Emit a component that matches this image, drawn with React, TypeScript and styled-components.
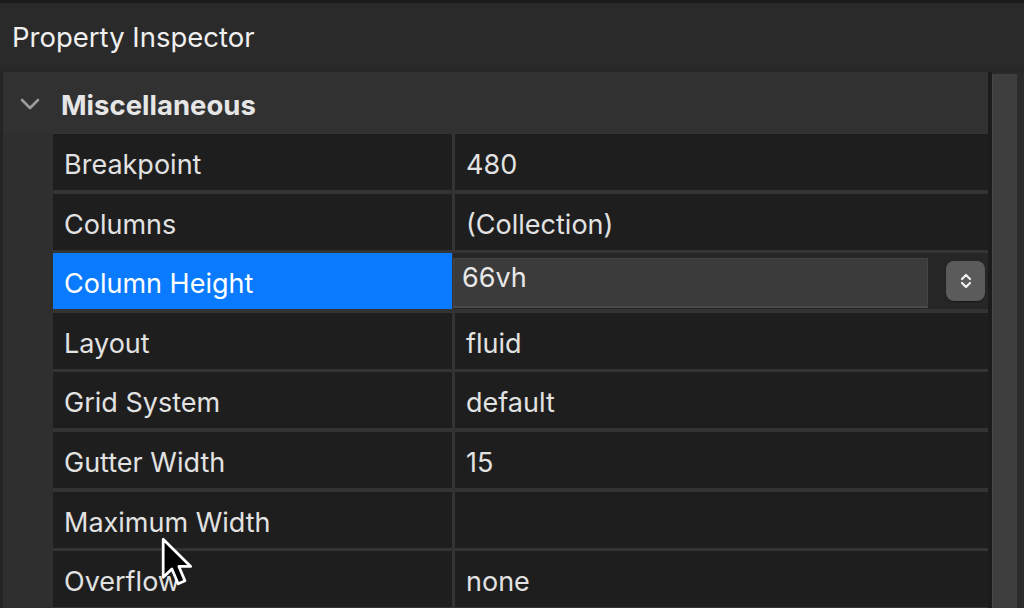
import React from "react";
import styled, { createGlobalStyle } from "styled-components";

const GlobalStyle = createGlobalStyle`
  html, body {
    margin: 0;
    padding: 0;
    background: #1c1c1c;
  }
  * {
    box-sizing: border-box;
  }
`;

const Window = styled.div`
  position: relative;
  width: 1024px;
  height: 608px;
  overflow: hidden;
  display: flex;
  flex-direction: column;
  background: #1e1e1e;
  border-top: 3px solid #1b1b1b;
  font-family: Inter, "Noto Sans", "Liberation Sans", sans-serif;
  color: #e2e2e2;
`;

const Header = styled.div`
  height: 69px;
  flex-shrink: 0;
  display: flex;
  align-items: center;
  padding: 2px 0 0 12px;
  background: #2a2a2a;
  border-bottom: 4px solid #272727;
  font-size: 27.5px;
  color: #f0f0f0;
`;

const Body = styled.div`
  flex: 1;
  display: flex;
  min-height: 0;
  border-left: 3px solid #242424;
`;

const Content = styled.div`
  width: 985px;
  display: flex;
  flex-direction: column;
  min-height: 0;
  background: #2f2f2f;
`;

const SectionHeader = styled.div`
  height: 61px;
  flex-shrink: 0;
  display: flex;
  align-items: center;
  gap: 21px;
  padding: 5px 0 0 17px;
  background: #313131;
  font-size: 27.5px;
  font-weight: 700;
  color: #e6e6e6;
`;

const Chevron = styled.svg`
  width: 20px;
  height: 12px;
  margin-top: -3px;
`;

const Section = styled.div`
  flex: 1;
  display: flex;
  padding-left: 50px;
  background: #2f2f2f;
`;

const Grid = styled.div`
  flex: 1;
  display: grid;
  grid-template-columns: 399px 1fr;
  grid-auto-rows: 56px;
  gap: 3.6px 3px;
  padding-top: 1px;
  background: #333333;
`;

const LabelCell = styled.div<{ $selected?: boolean }>`
  display: flex;
  align-items: center;
  padding: 5px 0 0 11px;
  font-size: 27px;
  background: ${(p) => (p.$selected ? "#0a7bff" : "#1e1e1e")};
  color: ${(p) => (p.$selected ? "#ffffff" : "#e2e2e2")};
`;

const ValueCell = styled.div<{ $editing?: boolean }>`
  display: flex;
  align-items: center;
  gap: 18px;
  padding: ${(p) => (p.$editing ? "0 3px 0 0" : "5px 3px 0 11px")};
  font-size: 27px;
  background: ${(p) => (p.$editing ? "#262626" : "#1e1e1e")};
  margin-left: ${(p) => (p.$editing ? "-2px" : "0")};
`;

const Input = styled.div`
  flex: 1;
  height: 50px;
  align-self: flex-end;
  margin-bottom: 1px;
  display: flex;
  align-items: flex-start;
  padding: 2px 0 0 8px;
  background: #3b3b3b;
  border: 1px solid #434343;
  border-bottom: 2px solid #4a4a4a;
  color: #e8e8e8;
`;

const Stepper = styled.button`
  width: 39px;
  height: 40px;
  flex-shrink: 0;
  display: flex;
  align-items: center;
  justify-content: center;
  padding: 0;
  border: none;
  border-radius: 8px;
  background: #5b5b5b;
  box-shadow: 0 1px 1px rgba(0, 0, 0, 0.4);
`;

const Scrollbar = styled.div`
  flex: 1;
  display: flex;
  background: #2a2a2a;
  border-left: 4px solid #1b1b1b;
  padding-top: 2px;
`;

const Track = styled.div`
  width: 27px;
  background: #3e3e3e;
  border-left: 1px solid #474747;
  border-right: 2px solid #2b2b2b;
`;

const Cursor = styled.svg`
  position: absolute;
  left: 160px;
  top: 533px;
  width: 36px;
  height: 55px;
`;

type Property = {
  label: string;
  value: string;
};

const properties: Property[] = [
  { label: "Breakpoint", value: "480" },
  { label: "Columns", value: "(Collection)" },
  { label: "Column Height", value: "66vh" },
  { label: "Layout", value: "fluid" },
  { label: "Grid System", value: "default" },
  { label: "Gutter Width", value: "15" },
  { label: "Maximum Width", value: "" },
  { label: "Overflow", value: "none" },
];

const SELECTED = "Column Height";

const App: React.FC = () => (
  <>
    <GlobalStyle />
    <Window>
      <Header>Property Inspector</Header>
      <Body>
        <Content>
          <SectionHeader>
            <Chevron viewBox="0 0 20 12">
              <path
                d="M2 2 L10 10 L18 2"
                fill="none"
                stroke="#9b9b9b"
                strokeWidth="2.6"
                strokeLinecap="round"
                strokeLinejoin="round"
              />
            </Chevron>
            Miscellaneous
          </SectionHeader>
          <Section>
            <Grid>
              {properties.map((p) =>
                p.label === SELECTED ? (
                  <React.Fragment key={p.label}>
                    <LabelCell $selected>{p.label}</LabelCell>
                    <ValueCell $editing>
                      <Input>{p.value}</Input>
                      <Stepper>
                        <svg width="14" height="20" viewBox="0 0 14 20">
                          <path
                            d="M3 8 L7 4 L11 8 M3 12 L7 16 L11 12"
                            fill="none"
                            stroke="#f2f2f2"
                            strokeWidth="2.2"
                            strokeLinecap="round"
                            strokeLinejoin="round"
                          />
                        </svg>
                      </Stepper>
                    </ValueCell>
                  </React.Fragment>
                ) : (
                  <React.Fragment key={p.label}>
                    <LabelCell>{p.label}</LabelCell>
                    <ValueCell>{p.value}</ValueCell>
                  </React.Fragment>
                )
              )}
            </Grid>
          </Section>
        </Content>
        <Scrollbar>
          <Track />
        </Scrollbar>
      </Body>
      <Cursor viewBox="0 0 17 26">
        <path
          d="M1.5 1.5 L1.5 19.5 L5.6 15.6 L8.6 22.6 L11.8 21.2 L8.9 14.4 L14.5 14.4 Z"
          fill="#000"
          stroke="#fff"
          strokeWidth="1.3"
          strokeLinejoin="round"
        />
      </Cursor>
    </Window>
  </>
);

export default App;
